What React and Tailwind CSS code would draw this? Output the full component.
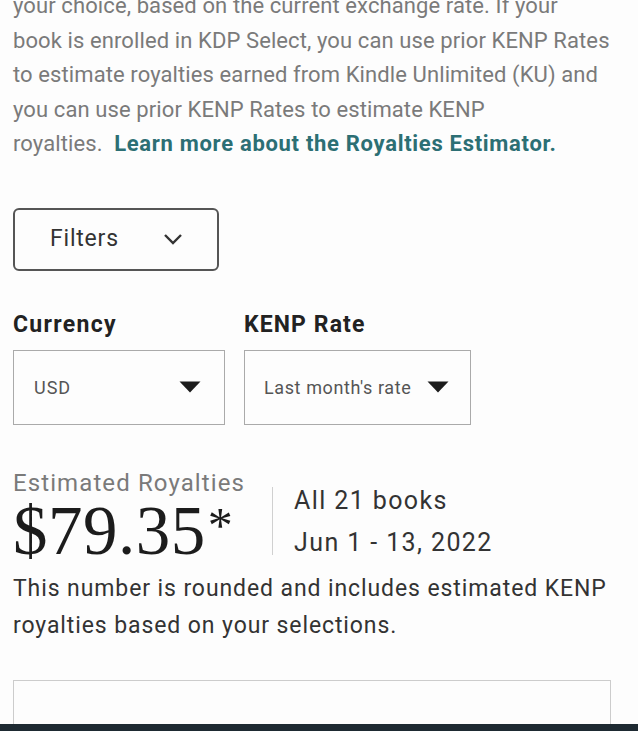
import React from 'react';

const Caret = () => (
    <svg width="22" height="12" viewBox="0 0 22 12" className="shrink-0">
        <path d="M0.5 0.5 L21.5 0.5 L11 11.5 Z" fill="#1c1c1c" />
    </svg>
);

const App = () => {
    return (
        <div className="w-[638px] h-[731px] bg-[#fdfdfd] overflow-hidden flex flex-col font-['Roboto',_'Liberation_Sans',_sans-serif]">
            <div className="flex-1 px-[13px] flex flex-col">
                <p className="-mt-[11px] text-[22px] leading-[34.6px] text-[#7a7a7a] tracking-[0.1px] whitespace-nowrap">
                    your choice, based on the current exchange rate. If your<br />
                    book is enrolled in KDP Select, you can use prior KENP Rates<br />
                    to estimate royalties earned from Kindle Unlimited (KU) and<br />
                    you can use prior KENP Rates to estimate KENP<br />
                    royalties.{' '}
                    <span className="font-bold text-[#2c6f74] ml-[6px] tracking-[0.7px]">Learn more about the Royalties Estimator.</span>
                </p>

                <button className="mt-[46px] w-[206px] h-[63px] border-2 border-[#555] rounded-[6px] flex items-center pl-[35px] gap-[44px] text-[23px] tracking-[0.8px] text-[#333]">
                    Filters
                    <svg width="20" height="12" viewBox="0 0 20 12">
                        <path d="M2 2 L10 10 L18 2" fill="none" stroke="#333" strokeWidth="2.4" />
                    </svg>
                </button>

                <div className="mt-[39px] flex gap-[19px]">
                    <div className="flex flex-col">
                        <span className="text-[23px] font-bold text-[#222] leading-[30px] tracking-[1.3px]">Currency</span>
                        <div className="mt-[10px] w-[212px] h-[75px] border border-[#aaa] flex items-center justify-between pl-[20px] pr-[23px]">
                            <span className="text-[18px] text-[#555] tracking-[1px]">USD</span>
                            <Caret />
                        </div>
                    </div>
                    <div className="flex flex-col">
                        <span className="text-[23px] font-bold text-[#222] leading-[30px] tracking-[1.1px]">KENP Rate</span>
                        <div className="mt-[10px] w-[227px] h-[75px] border border-[#aaa] flex items-center justify-between pl-[19px] pr-[21px]">
                            <span className="text-[18px] text-[#555] tracking-[0.6px] whitespace-nowrap">Last month's rate</span>
                            <Caret />
                        </div>
                    </div>
                </div>

                <div className="mt-[44px] flex items-start">
                    <div className="flex flex-col w-[259px]">
                        <span className="text-[24px] text-[#7a7a7a] leading-[28px] tracking-[1.1px] whitespace-nowrap">Estimated Royalties</span>
                        <span className="font-['Liberation_Serif',_serif] text-[69px] leading-[68px] text-[#1c1c1c] tracking-[0.5px] whitespace-nowrap">
                            $79.35<span className="text-[50px] align-top relative -top-[6px] ml-[2px]">*</span>
                        </span>
                    </div>
                    <div className="mt-[18px] h-[68px] w-px bg-[#d0d0d0]"></div>
                    <div className="ml-[21px] mt-[11px] flex flex-col text-[25px] text-[#333] leading-[42px] tracking-[1.4px] whitespace-nowrap">
                        <span>All 21 books</span>
                        <span>Jun 1 - 13, 2022</span>
                    </div>
                </div>

                <p className="mt-[5px] text-[23px] leading-[37px] text-[#333] tracking-[0.9px] whitespace-nowrap">
                    This number is rounded and includes estimated KENP<br />
                    royalties based on your selections.
                </p>

                <div className="mt-[36px] flex-1 w-[598px] border border-b-0 border-[#ccc]"></div>
            </div>
            <div className="h-[7px] bg-[#1e2a32]"></div>
        </div>
    );
};

export default App;
